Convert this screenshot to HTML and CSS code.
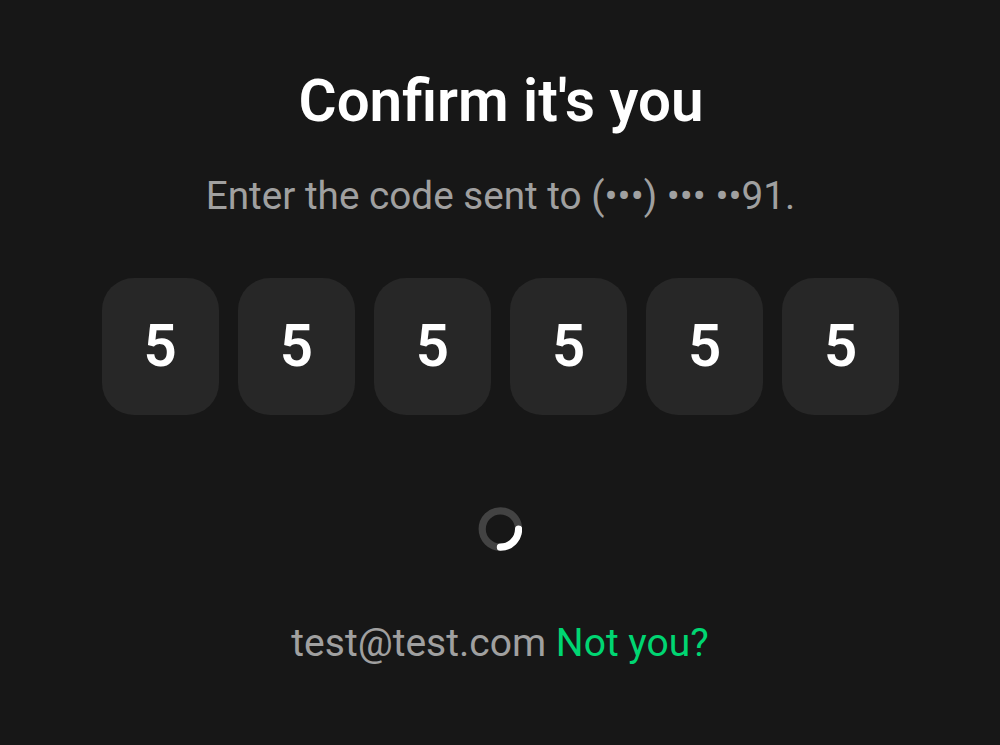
FILE: index.html
```html
<!DOCTYPE html>
<html lang="en">
<head>
<meta charset="utf-8">
<title>Confirm it's you</title>
<link rel="stylesheet" href="styles.css">
</head>
<body>
<main class="verify">
  <h1 class="title">Confirm it's you</h1>
  <p class="hint">Enter the code sent to (•••) ••• ••91.</p>
  <div class="code">
    <span class="digit">5</span>
    <span class="digit">5</span>
    <span class="digit">5</span>
    <span class="digit">5</span>
    <span class="digit">5</span>
    <span class="digit">5</span>
  </div>
  <svg class="spinner" viewBox="0 0 44 44" aria-label="Loading">
    <circle cx="22.4" cy="22" r="18.2" fill="none" stroke="#434343" stroke-width="7.2"/>
    <path d="M40.6 22A18.2 18.2 0 0 1 22.4 40.2" fill="none" stroke="#fff" stroke-width="7.2" stroke-linecap="round"/>
  </svg>
  <p class="account">test@test.com <a class="switch">Not you?</a></p>
</main>
</body>
</html>
```
FILE: styles.css
```css
body {
  margin: 0;
  background: #171717;
  font-family: Roboto, sans-serif;
}
.verify {
  box-sizing: border-box;
  width: 1000px;
  height: 745px;
  padding-top: 66px;
  display: flex;
  flex-direction: column;
  align-items: center;
}
.title {
  margin: 0;
  padding-left: 2px;
  color: #fff;
  font-size: 58.3px;
  font-weight: 600;
  line-height: 71px;
}
.hint {
  margin: 35px 0 0;
  padding-left: 1px;
  color: #a0a0a0;
  font-size: 38.7px;
  line-height: 48px;
}
.code {
  display: flex;
  gap: 19.1px;
  margin-top: 58.4px;
  padding-left: 1px;
}
.digit {
  width: 117px;
  height: 136.2px;
  border-radius: 32px;
  background: #272727;
  color: #fff;
  font-size: 58.3px;
  font-weight: 600;
  line-height: 137px;
  text-align: center;
}
.spinner {
  width: 44px;
  height: 44px;
  margin-top: 92.4px;
}
.account {
  margin: 68px 0 0;
  color: #a0a0a0;
  font-size: 39px;
  line-height: 48px;
}
.switch {
  color: #00d672;
}
```
